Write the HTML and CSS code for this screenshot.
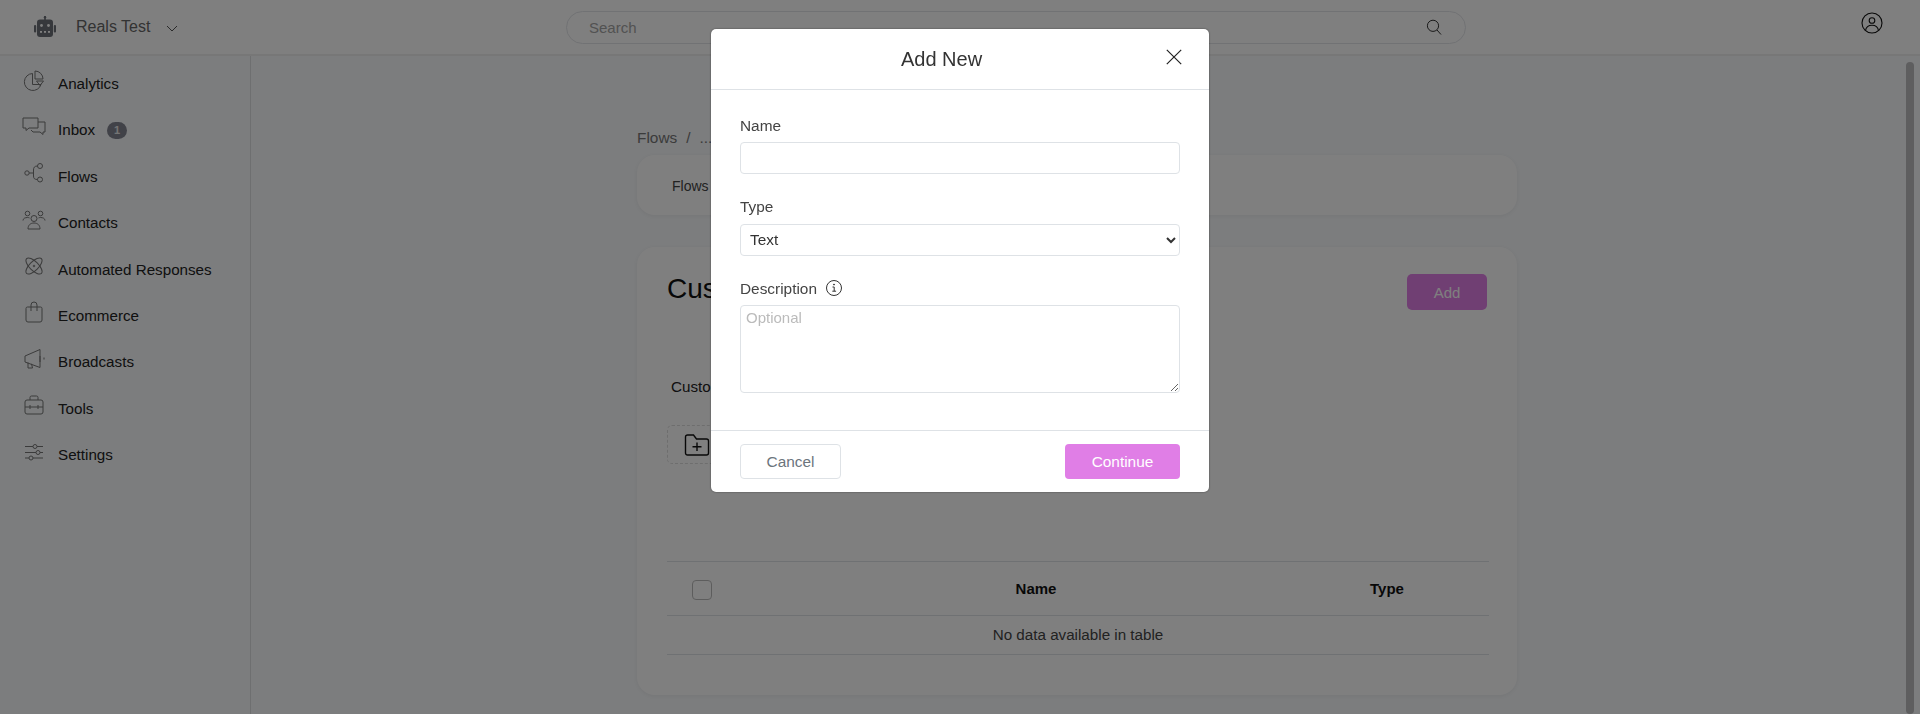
FILE: index.html
```html
<!DOCTYPE html>
<html lang="en">
<head>
  <meta charset="UTF-8" />
  <meta name="viewport" content="width=device-width, initial-scale=1.0" />
  <title>Custom Fields</title>
  <link rel="stylesheet" href="styles.css">
</head>
<body>
  <header class="topbar">
    <div class="brand">
      <svg class="robot" viewBox="0 0 22 22" width="22" height="22" fill="#6c7078">
        <rect x="10.2" y="0" width="1.6" height="4"/>
        <circle cx="11" cy="1.2" r="1.2"/>
        <rect x="3" y="3.5" width="16" height="17.5" rx="3"/>
        <rect x="0" y="9" width="2.2" height="7.5" rx="1"/>
        <rect x="19.8" y="9" width="2.2" height="7.5" rx="1"/>
        <circle cx="7.5" cy="9.5" r="1.4" fill="#fff"/>
        <circle cx="14.5" cy="9.5" r="1.4" fill="#fff"/>
        <rect x="6" y="15" width="2" height="1.8" fill="#fff"/>
        <rect x="10" y="15" width="2" height="1.8" fill="#fff"/>
        <rect x="14" y="15" width="2" height="1.8" fill="#fff"/>
      </svg>
      <span class="brand-name">Reals Test</span>
      <svg class="chevron" viewBox="0 0 12 7" width="12" height="7" fill="none" stroke="#555" stroke-width="1"><path d="M1 1l5 5 5-5"/></svg>
    </div>
    <div class="search">
      <span class="search-text">Search</span>
      <svg viewBox="0 0 16 16" width="16" height="16" fill="none" stroke="#333" stroke-width="1"><circle cx="7" cy="6.800" r="5.600"/><path d="M11 11l4 4.500"/></svg>
    </div>
    <svg class="user" viewBox="0 0 22 22" width="22" height="22" fill="none" stroke="#111" stroke-width="1.100">
      <circle cx="11" cy="11" r="10"/>
      <circle cx="11" cy="8.500" r="2.800"/>
      <path d="M4.500 18.500c.6-3.600 3.200-5.300 6.500-5.300s5.900 1.700 6.500 5.300"/>
    </svg>
  </header>

  <div class="main">
    <nav class="sidebar">
      <a class="nav-item">
        <svg viewBox="0 0 24 24" width="24" height="24"><path d="M10.500 5.500a8.500 8.500 0 1 0 8.500 11h-8.500z"/><path d="M13 3a8 8 0 0 1 8 8h-8z"/><path d="M14.500 13h7l-3.500 4.500z"/></svg>
        <span>Analytics</span>
      </a>
      <a class="nav-item">
        <svg viewBox="0 0 24 24" width="24" height="24"><path d="M1 3h15v10H7l-3 2.500V13H1z"/><path d="M16 7h7v10h-2v2.500L18 17h-7l-2-2"/></svg>
        <span>Inbox</span>
        <b class="badge">1</b>
      </a>
      <a class="nav-item">
        <svg viewBox="0 0 24 24" width="24" height="24"><circle cx="5" cy="12" r="2.200"/><circle cx="18" cy="5" r="2.500"/><circle cx="18" cy="18.500" r="2.500"/><path d="M7.200 12h4.300M15.500 5c-3 0-4 1.500-4 4v6c0 2.500 1 3.500 4 3.500"/></svg>
        <span>Flows</span>
      </a>
      <a class="nav-item">
        <svg viewBox="0 0 24 24" width="24" height="24"><circle cx="5.500" cy="5.500" r="2.300"/><circle cx="18.500" cy="5.500" r="2.300"/><circle cx="12" cy="10.500" r="3"/><path d="M1 12.500c0-2 2-3 4.500-3 1 0 1.500.2 2 .4M23 12.500c0-2-2-3-4.500-3-1 0-1.500.2-2 .4M6 21c0-4 2.500-6 6-6s6 2 6 6z"/></svg>
        <span>Contacts</span>
      </a>
      <a class="nav-item">
        <svg viewBox="0 0 24 24" width="24" height="24"><ellipse cx="12" cy="12" rx="10.500" ry="4.500" transform="rotate(45 12 12)"/><ellipse cx="12" cy="12" rx="10.500" ry="4.500" transform="rotate(-45 12 12)"/><circle cx="12" cy="12" r=".8"/></svg>
        <span>Automated Responses</span>
      </a>
      <a class="nav-item">
        <svg viewBox="0 0 24 24" width="24" height="24"><path d="M5.500 7h13A1.500 1.500 0 0 1 20 8.500V20a2 2 0 0 1-2 2H6a2 2 0 0 1-2-2V8.500A1.500 1.500 0 0 1 5.500 7z"/><path d="M9 11V5a3 3 0 0 1 6 0v6"/></svg>
        <span>Ecommerce</span>
      </a>
      <a class="nav-item">
        <svg viewBox="0 0 24 24" width="24" height="24"><path d="M3 9l15-6.500v18L3 15z"/><path d="M6 15.500V21h4.500l-1-4.200M18 9v6M22 10.500v2"/></svg>
        <span>Broadcasts</span>
      </a>
      <a class="nav-item">
        <svg viewBox="0 0 24 24" width="24" height="24"><rect x="3" y="7" width="18" height="14" rx="2"/><path d="M8 7V4.500A1.500 1.500 0 0 1 9.500 3h5A1.500 1.500 0 0 1 16 4.500V7M3 14h18M8 12v4M16 12v4"/></svg>
        <span>Tools</span>
      </a>
      <a class="nav-item">
        <svg viewBox="0 0 24 24" width="24" height="24"><path d="M3 6.500h8M15 6.500h6M3 12.500h11M18 12.500h3M3 18h4M11 18h10"/><circle cx="13" cy="6.500" r="2"/><circle cx="16" cy="12.500" r="2"/><circle cx="9" cy="18" r="2"/></svg>
        <span>Settings</span>
      </a>
    </nav>

    <section class="content">
      <div class="breadcrumb">Flows<span class="crumb-sep">/</span>......</div>
      <div class="card crumb-card">Flows</div>
      <div class="card fields-card">
        <div class="title-row">
          <h2>Custom Fields</h2>
          <button class="add-btn">Add</button>
        </div>
        <div class="tab-label">Custom Fields</div>
        <div class="folder-btn">
          <svg viewBox="0 0 26 24" width="26" height="24" fill="none" stroke="#111" stroke-width="1.400"><path d="M1.500 4a2 2 0 0 1 2-2h6l3 4h10a2 2 0 0 1 2 2v12a2 2 0 0 1-2 2h-19a2 2 0 0 1-2-2z"/><path d="M13 9.500v8.500M8.500 13.800h9"/></svg>
        </div>
        <table class="fields-table">
          <thead>
            <tr>
              <th class="check-col"><span class="checkbox"></span></th>
              <th class="name-col">Name</th>
              <th class="type-col">Type</th>
            </tr>
          </thead>
          <tbody>
            <tr><td colspan="3">No data available in table</td></tr>
          </tbody>
        </table>
      </div>
    </section>

    <div class="scrollbar"><div class="scroll-thumb"></div></div>
  </div>

  <div class="overlay">
    <div class="modal">
      <div class="modal-head">
        <h3>Add New</h3>
        <svg class="close" viewBox="0 0 16 16" width="16" height="16" fill="none" stroke="#222" stroke-width="1.200"><path d="M.8.800l14.400 14.400M15.200.800L.8 15.200"/></svg>
      </div>
      <div class="modal-body">
        <label class="field-label name-label">Name</label>
        <input type="text" class="field" />
        <label class="field-label type-label">Type</label>
        <select class="field select-field">
          <option>Text</option>
          <option>Number</option>
          <option>Date</option>
        </select>
        <label class="field-label desc-label">Description
          <svg viewBox="0 0 16 16" width="16" height="16" fill="none" stroke="#333" stroke-width="1"><circle cx="8" cy="8" r="7.500"/><path d="M6.500 7H8.200v4.200M6.300 11.200h3.800"/><circle cx="8" cy="4.600" r=".5" fill="#333"/></svg>
        </label>
        <textarea class="field notes" placeholder="Optional"></textarea>
      </div>
      <div class="modal-foot">
        <button class="cancel-btn">Cancel</button>
        <button class="continue-btn">Continue</button>
      </div>
    </div>
  </div>
</body>
</html>
```

FILE: styles.css
```css
* {
  box-sizing: border-box;
}

html, body {
  margin: 0;
  height: 100%;
  overflow: hidden;
}

body {
  display: flex;
  flex-direction: column;
  background-color: #f8fafc;
  font-family: "Liberation Sans", Arial, sans-serif;
  font-size: 15px;
  color: #222;
}

.topbar {
  flex: none;
  height: 56px;
  display: flex;
  align-items: center;
  background-color: #fff;
  border-bottom: 2px solid #eeeeee;
  padding-left: 34px;
}

.brand {
  width: 532px;
  display: flex;
  align-items: center;
}

.brand-name {
  margin-left: 20px;
  font-size: 16px;
  color: #666;
}

.chevron {
  margin-left: 16px;
  margin-top: 3px;
}

.search {
  width: 900px;
  height: 33px;
  display: flex;
  align-items: center;
  justify-content: space-between;
  padding: 0 23px 0 22px;
  border: 1px solid #e2e4e8;
  border-radius: 17px;
  font-size: 15px;
  color: #a4a4a4;
}

.user {
  margin-left: 395px;
  margin-bottom: 8px;
}

.main {
  flex: 1;
  display: flex;
  min-height: 0;
}

.sidebar {
  flex: none;
  width: 251px;
  padding-top: 4.300px;
  border-right: 1px solid #dcdee0;
}

.nav-item {
  height: 46.400px;
  display: flex;
  align-items: center;
  gap: 12px;
  padding-left: 22px;
  color: #222;
  font-size: 15.200px;
}

.nav-item svg {
  flex: none;
  margin-bottom: 6px;
  fill: none;
  stroke: #777;
  stroke-width: 1;
}

.badge {
  width: 20px;
  height: 17px;
  margin-top: 2px;
  border-radius: 9px;
  background-color: #828490;
  color: #e8e8e8;
  font-size: 11px;
  text-align: center;
  line-height: 17px;
}

.content {
  flex: 1;
  min-width: 0;
  padding-top: 72px;
  display: flex;
  flex-direction: column;
  align-items: center;
  overflow: hidden;
}

.breadcrumb {
  width: 880px;
  height: 27px;
  padding-top: 1px;
  color: #777;
  font-size: 15.400px;
}

.crumb-sep {
  margin: 0 9px;
}

.card {
  flex: none;
  width: 880px;
  background-color: #fff;
  border-radius: 18px;
  box-shadow: 0 1px 4px rgba(0, 0, 0, 0.06);
}

.crumb-card {
  height: 60px;
  padding: 23px 35px;
  font-size: 14px;
  color: #444;
}

.fields-card {
  height: 448px;
  margin-top: 32px;
  padding: 27px 30px 0;
}

.title-row {
  height: 76px;
  display: flex;
  justify-content: space-between;
  align-items: flex-start;
}

h2 {
  margin: 0;
  font-size: 28px;
  line-height: 30px;
  font-weight: 400;
  color: #111;
}

.add-btn {
  width: 80px;
  height: 36px;
  border: none;
  border-radius: 5px;
  background-color: #e07ee6;
  color: #fff;
  font-family: inherit;
  font-size: 15px;
}

.tab-label {
  margin-left: 4px;
  height: 75px;
  padding-top: 28px;
  font-size: 15.200px;
  color: #222;
}

.folder-btn {
  width: 130px;
  height: 39px;
  padding: 7px 16px;
  border: 1px dashed #ddd;
  border-radius: 5px;
}

.fields-table {
  width: 822px;
  margin-top: 97px;
  border-collapse: collapse;
  table-layout: fixed;
  font-size: 15.200px;
}

.fields-table th {
  height: 54px;
  padding: 0 0 1px;
  border-top: 1px solid #dee2e6;
  border-bottom: 1px solid #dee2e6;
  font-size: 15px;
  font-weight: 700;
  color: #111;
}

.fields-table td {
  height: 39px;
  padding: 0 0 2px;
  border-bottom: 1px solid #dee2e6;
  text-align: center;
  color: #444;
}

.check-col {
  width: 120px;
  text-align: left;
}

.type-col {
  width: 204px;
}

.checkbox {
  display: block;
  width: 20px;
  height: 20px;
  margin: 4px 0 0 25px;
  border: 1px solid #bbb;
  border-radius: 4px;
}

.scrollbar {
  flex: none;
  width: 17px;
  padding: 6px 6px 0 3px;
}

.scroll-thumb {
  height: 100%;
  border-radius: 4px;
  background-color: #bcbcbe;
}

.overlay {
  position: fixed;
  top: 0;
  left: 0;
  right: 0;
  bottom: 0;
  display: flex;
  justify-content: center;
  align-items: flex-start;
  padding-top: 29px;
  background-color: rgba(0, 0, 0, 0.5);
}

.modal {
  width: 498px;
  height: 463px;
  display: flex;
  flex-direction: column;
  background-color: #fff;
  border-radius: 5px;
  box-shadow: 0 0 2px rgba(0, 0, 0, 0.5);
}

.modal-head {
  flex: none;
  height: 61px;
  display: flex;
  align-items: center;
  justify-content: center;
  padding-right: 37px;
  position: relative;
  border-bottom: 1px solid #dee2e6;
}

h3 {
  margin: 0;
  font-size: 20px;
  font-weight: 400;
  color: #333;
}

.close {
  position: absolute;
  top: 20px;
  right: 27px;
}

.modal-body {
  flex: 1;
  padding: 26px 29px 0;
  display: flex;
  flex-direction: column;
}

.field-label {
  height: 26px;
  font-size: 15.400px;
  color: #444;
  display: flex;
  align-items: flex-start;
  gap: 9px;
}

.name-label {
  padding-top: 1px;
}

.type-label {
  margin-top: 24px;
}

.desc-label {
  margin-top: 24px;
  height: 25px;
}

.field {
  width: 100%;
  height: 32px;
  flex: none;
  border: 1px solid #dee2e6;
  border-radius: 4px;
  background-color: #fff;
  font-family: inherit;
  font-size: 15.400px;
  color: #333;
  padding: 0 5px;
}

.select-field {
  padding-bottom: 2px;
}

.notes {
  height: 88px;
  padding: 3px 5px;
  font-size: 15px;
}

.notes::placeholder {
  color: #bbb;
}

.modal-foot {
  flex: none;
  height: 62px;
  display: flex;
  justify-content: space-between;
  align-items: flex-start;
  padding: 13px 29px 0;
  border-top: 1px solid #dee2e6;
}

.cancel-btn {
  width: 101px;
  height: 35px;
  border: 1px solid #dee2e6;
  border-radius: 4px;
  background-color: #fff;
  color: #6c757d;
  font-family: inherit;
  font-size: 15.400px;
}

.continue-btn {
  width: 115px;
  height: 35px;
  border: none;
  border-radius: 4px;
  background-color: #e07ee6;
  color: #fff;
  font-family: inherit;
  font-size: 15.400px;
}
```
